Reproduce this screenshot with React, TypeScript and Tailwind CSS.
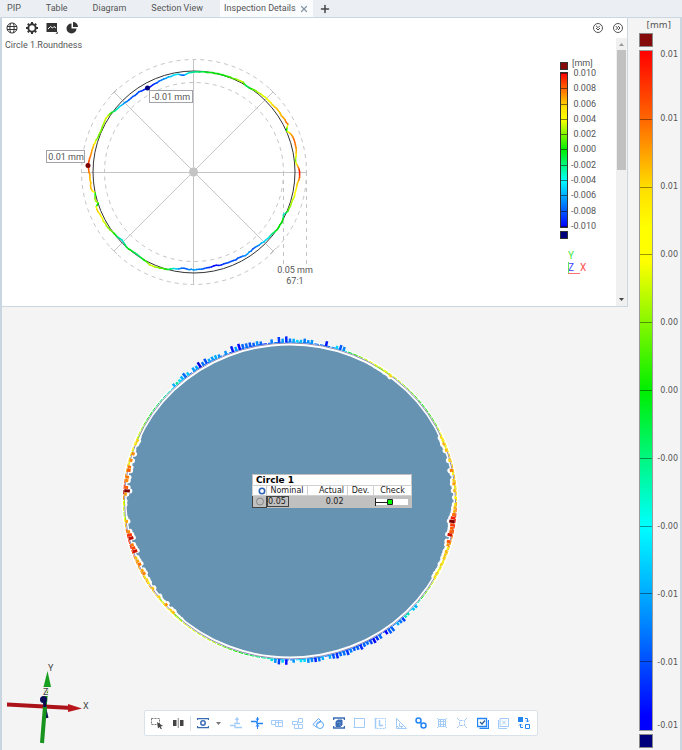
import type { ReactNode } from 'react';
import { ChevronsDown, ChevronsRight, Plus, X } from 'lucide-react';

const LIGHT = '#a3cbf8';
const BLUE = '#2485f5';
const NAVY = '#3a6cb5';

// [angle in degrees, radius] of the measured roundness profile
const profile: [number, number][] = [
  [0, 106], [3, 104], [6, 102], [10, 104], [15, 105], [18, 105], [22, 104], [24, 101], [27, 105], [33, 104],
  [38, 104], [45, 103], [48, 103], [53, 102], [58, 100], [62, 103], [65, 102], [72, 101], [80, 101], [88, 100],
  [94, 99], [96, 97], [99, 99], [106, 98], [112, 97], [118, 96], [124, 97], [130, 97], [136, 98], [142, 100],
  [147, 103], [155, 102], [160, 102], [165, 104], [172, 105], [176, 106], [182, 104], [190, 104], [192, 101],
  [196, 103], [198, 101], [200, 104], [207, 103], [215, 102], [223, 99], [229, 101], [235, 100], [240, 101],
  [245, 103], [254, 101], [258, 99], [263, 97], [270, 98], [276, 97], [282, 96], [290, 97], [297, 97], [303, 98],
  [307, 97], [312, 98], [318, 99], [325, 101], [332, 101], [334, 99], [338, 102], [346, 103], [354, 104],
  [358, 106], [360, 106],
];

// [angle in degrees, deviation from -1 to 1] along the scanned circle
const scan: [number, number][] = [
  [0, 0.5], [6, 0.6], [14, 0.6], [24, 0.45], [28, 0.15], [36, 0], [44, 0.2], [52, 0.4], [60, 0.42], [64, 0.2],
  [68, -0.1], [71, -0.5], [76, -0.75], [86, -0.7], [90, -0.75], [94, -0.7], [98, -0.9], [104, -0.8], [112, -0.75],
  [118, -0.8], [122, -0.85], [128, -0.7], [132, -0.5], [138, -0.25], [147, 0], [152, 0.25], [156, 0.45], [162, 0.5],
  [168, 0.65], [173, 0.9], [176, 1.1], [178, 0.7], [181, 0.4], [184, 0.3], [188, 0.6], [191, 0.95], [196, 1],
  [202, 0.7], [212, 0.65], [218, 0.5], [230, 0.4], [242, 0.3], [252, 0], [262, -0.3], [269, -0.8], [272, -0.5],
  [278, -0.7], [288, -0.8], [295, -0.85], [304, -0.8], [313, -0.6], [319, -0.4], [323, 0.1], [330, 0.45],
  [342, 0.6], [348, 0.9], [353, 1.05], [356, 0.8], [360, 0.5],
];

const stops: [number, number[]][] = [
  [-1.2, [0, 0, 130]],
  [-1, [0, 0, 255]],
  [-0.45, [0, 225, 255]],
  [0, [0, 230, 0]],
  [0.45, [255, 255, 0]],
  [1, [255, 30, 0]],
  [1.2, [128, 0, 0]],
];

function heat(v: number) {
  const value = Math.max(-1.2, Math.min(1.2, v));
  const i = Math.max(1, stops.findIndex(([at]) => at >= value));
  const [a, from] = stops[i - 1];
  const [b, to] = stops[i];
  const t = (value - a) / (b - a);
  return `rgb(${from.map((c, k) => Math.round(c + (to[k] - c) * t)).join(',')})`;
}

function sample(points: [number, number][], angle: number) {
  const i = Math.max(1, points.findIndex(([at]) => at >= angle));
  const [a, from] = points[i - 1];
  const [b, to] = points[i];
  return from + ((to - from) * (angle - a)) / (b - a);
}

function polar(cx: number, cy: number, rx: number, ry: number, angle: number) {
  const rad = (angle * Math.PI) / 180;
  return [cx + rx * Math.cos(rad), cy - ry * Math.sin(rad)];
}

const noise = (n: number) => Math.abs((Math.sin(n * 12.9898) * 43758.5453) % 1);

function RoundnessPlot() {
  const at = (angle: number) => {
    const r = sample(profile, angle) + (noise(angle) - 0.5) * 0.8;
    return polar(194, 172, r, r, angle);
  };
  const steps = Array.from({ length: 240 }, (_, i) => i * 1.5);

  return (
    <svg viewBox="40 54 290 250" className="ml-[38px] h-[250px] w-[290px] shrink-0">
      <g fill="none" stroke="#c4c4c4" strokeWidth="1">
        <circle cx="194" cy="172" r="112.5" strokeDasharray="4 4" />
        <circle cx="194" cy="172" r="89.5" strokeDasharray="4 4" />
        <path d="M283.5 172V266M306.5 172V266" strokeDasharray="4 4" />
        <path d="M81 172.5H307M193.5 60V285M114 92L273 251M114 251L273 92" />
        <path d="M111 95L117 89M270 89L276 95M111 248L117 254M270 254L276 248" />
      </g>
      <circle cx="194" cy="172" r="101" fill="none" stroke="#333" strokeWidth="1" />
      {steps.map((angle) => {
        const [x1, y1] = at(angle);
        const [x2, y2] = at(angle === 358.5 ? 0 : angle + 1.5);
        return (
          <line
            key={angle}
            x1={x1}
            y1={y1}
            x2={x2}
            y2={y2}
            stroke={heat((sample(profile, angle) - 101) / 5)}
            strokeWidth="1.5"
            strokeLinecap="round"
          />
        );
      })}
      <circle cx="193.5" cy="172" r="4.5" fill="#c4c4c4" />
      <circle cx="147.5" cy="88" r="2.5" fill="#00007c" />
      <circle cx="88" cy="165.5" r="2.5" fill="#7c0000" />
      <rect x="149.5" y="90.5" width="43" height="12" fill="#fff" stroke="#a2a2aa" />
      <rect x="46.5" y="150.5" width="38" height="12" fill="#fff" stroke="#a2a2aa" />
      <g fontSize="9" fill="#555" textAnchor="middle">
        <text x="171" y="100">-0.01 mm</text>
        <text x="66" y="160">0.01 mm</text>
        <text x="295" y="273">0.05 mm</text>
        <text x="295" y="284">67:1</text>
      </g>
    </svg>
  );
}

const legend = ['0.010', '0.008', '0.006', '0.004', '0.002', '0.000', '-0.002', '-0.004', '-0.006', '-0.008', '-0.010'];

function Legend() {
  return (
    <div className="mr-5 flex w-9 shrink-0 flex-col pt-[4px] text-[9px] leading-[10px] text-[#555]">
      <div className="flex h-[10px] items-start gap-1">
        <span className="mt-1 h-2 w-2 border border-[#333] bg-[#870a0a]" />
        <span>[mm]</span>
      </div>
      <div className="flex">
        <div className="mt-1 flex h-[156px] w-2 flex-col justify-between border border-[#333] bg-[linear-gradient(to_bottom,#f00_0%,#f60_10%,#fd0_22%,#ff0_30%,#0e0_50%,#0ff_70%,#08f_84%,#00f_100%)]">
          {legend.map((label) => (
            <i key={label} className="h-px bg-black/50" />
          ))}
        </div>
        <div className="flex h-[163px] flex-1 flex-col justify-between text-right">
          {legend.map((label) => (
            <span key={label}>{label}</span>
          ))}
        </div>
      </div>
      <span className="h-2 w-2 border border-[#333] bg-[#00007c]" />
      <svg viewBox="0 0 24 28" className="mt-[10px] ml-[5px] h-7 w-6" fontSize="10">
        <text x="3" y="10" fill="#3fe43f">Y</text>
        <text x="3" y="22" fill="#4040ff">Z</text>
        <text x="15" y="22" fill="#ff5050">X</text>
        <path d="M3.5 13V25" stroke="#5fe85f" />
        <path d="M3 24.5H15" stroke="#ff7070" />
      </svg>
    </div>
  );
}

function PanelTool({ label, children }: { label: string; children: ReactNode }) {
  return (
    <button type="button" aria-label={label} className="flex h-4 w-3 items-center justify-center text-[#333]">
      <svg viewBox="0 0 12 12" className="h-3 w-3 shrink-0" fill="none" stroke="currentColor">
        {children}
      </svg>
    </button>
  );
}

function DetailsPanel() {
  return (
    <section className="flex h-[289px] shrink-0 flex-col border-r border-b border-[#cbd7e0] bg-white">
      <div className="flex h-5 shrink-0 items-center justify-between pr-1 pl-1">
        <div className="flex gap-2">
          <PanelTool label="Globe">
            <circle cx="6" cy="6" r="5" />
            <path d="M1 4.5H11M1 7.5H11M4.5 1.5C3.7 4 3.7 8 4.5 10.5M7.5 1.5C8.3 4 8.3 8 7.5 10.5" />
          </PanelTool>
          <PanelTool label="Settings">
            <circle cx="6" cy="6" r="3.7" strokeWidth="2" />
            <path d="M6 0V2M6 10V12M0 6H2M10 6H12M1.8 1.8L3 3M9 9L10.2 10.2M1.8 10.2L3 9M9 3L10.2 1.8" strokeWidth="2" />
          </PanelTool>
          <PanelTool label="Picture">
            <path d="M0.5 1H11V10H0.5Z" fill="currentColor" stroke="none" />
            <path d="M2 7L4.5 4.5L6.5 6L8 4.5L10 6" stroke="#fff" />
            <path d="M9 12H12V9Z" fill="currentColor" stroke="#fff" strokeWidth="0.5" />
          </PanelTool>
          <PanelTool label="Pie chart">
            <path d="M5.5 1.5V6.5H10.5A5 5 0 1 1 5.5 1.5Z" fill="currentColor" stroke="none" />
            <path d="M7 0A5 5 0 0 1 12 5H7Z" fill="currentColor" stroke="none" />
          </PanelTool>
        </div>
        <div className="flex gap-2.5">
          <button type="button" aria-label="Collapse down" className="flex h-[10px] w-[10px] items-center justify-center rounded-full border border-[#555] text-[#444]">
            <ChevronsDown size={8} strokeWidth={3} className="shrink-0" />
          </button>
          <button type="button" aria-label="Collapse right" className="flex h-[10px] w-[10px] items-center justify-center rounded-full border border-[#555] text-[#444]">
            <ChevronsRight size={8} strokeWidth={3} className="shrink-0" />
          </button>
        </div>
      </div>
      <div className="flex min-h-0 flex-1">
        <div className="flex min-w-0 flex-1 flex-col">
          <h2 className="h-4 pl-[3px] text-[9px] leading-[14px] text-[#555]">Circle 1.Roundness</h2>
          <div className="flex flex-1 items-start justify-between">
            <RoundnessPlot />
            <Legend />
          </div>
        </div>
        <div className="flex w-[11px] flex-col items-center bg-[#f0f0f0]">
          <svg viewBox="0 0 11 12" className="h-3 w-[11px]">
            <path d="M3 8L5.5 5L8 8Z" fill="#999" />
          </svg>
          <div className="h-[120px] w-[9px] bg-[#c1c1c1]" />
          <svg viewBox="0 0 11 12" className="mt-auto h-3 w-[11px]">
            <path d="M3 4L5.5 7L8 4Z" fill="#444" />
          </svg>
        </div>
      </div>
    </section>
  );
}

function ScannedCircle() {
  const segments = Array.from({ length: 180 }, (_, i) => i * 2);
  const ticks = Array.from({ length: 288 }, (_, i) => {
    const angle = i * 1.25;
    const base = sample(scan, angle);
    const value = base + (noise(i + 3) - 0.5) * 0.5;
    const weight = Math.max(0, Math.abs(value) - 0.35);
    const length = base < 0 ? 2.5 + weight * 7 * (0.3 + noise(i + 9) * 0.7) : 1 + weight * 5;
    return { angle, value, length, out: base < 0, strong: Math.abs(base) > 0.38 && noise(i) > 0.2 };
  }).filter((tick) => tick.strong);

  const tickLine = (angle: number, length: number, out: boolean) => {
    const [x1, y1] = polar(289.5, 501, 166, 158.5, angle);
    const reach = out ? length : -length;
    const [x2, y2] = polar(289.5, 501, 166 + reach, 158.5 + reach, angle);
    return { x1, y1, x2, y2 };
  };

  return (
    <svg viewBox="2 307 625 443" className="h-full w-full" fill="none">
      <ellipse cx="289.5" cy="501" rx="166" ry="158" fill="#6793b2" stroke="#fff" strokeWidth="5" />
      {ticks.filter((tick) => !tick.out).map((tick) => (
        <line key={tick.angle} {...tickLine(tick.angle, tick.length, false)} stroke="#fff" strokeWidth="5" strokeLinecap="round" />
      ))}
      <ellipse cx="289.5" cy="501" rx="165.5" ry="158" stroke="#8d8bb5" strokeWidth="1" />
      {segments.map((angle) => {
        const [x1, y1] = polar(289.5, 501, 166.5, 159, angle);
        const [x2, y2] = polar(289.5, 501, 166.5, 159, angle + 1.6);
        return <line key={angle} x1={x1} y1={y1} x2={x2} y2={y2} stroke={heat(sample(scan, angle))} strokeWidth="1" />;
      })}
      {ticks.map((tick) => (
        <line
          key={tick.angle}
          {...tickLine(tick.angle, tick.length, tick.out)}
          stroke={heat(tick.value)}
          strokeWidth={tick.out ? 2.5 : 3}
        />
      ))}
    </svg>
  );
}

function AxisTriad() {
  return (
    <svg viewBox="0 655 110 95" className="absolute bottom-0 -left-0.5 h-[95px] w-[110px]" fontSize="9" fill="#444">
      <path d="M44 705L47 718" stroke="#0b0b55" strokeWidth="3" />
      <path d="M45 706L47 684" stroke="#17931e" strokeWidth="3.5" />
      <path d="M43.5 687L47.5 671L51 687Z" fill="#17a01f" />
      <circle cx="43.5" cy="699.5" r="3.5" fill="#0b0b55" />
      <path d="M7 704.5L72 708" stroke="#ab1219" strokeWidth="4" />
      <path d="M68 704L82 708.5L68 712Z" fill="#b9161b" />
      <path d="M45 706L42 743" stroke="#17931e" strokeWidth="4" />
      <path d="M44 698L45 707" stroke="#0b0b55" strokeWidth="3" />
      <text x="48" y="671">Y</text>
      <text x="83" y="709">X</text>
      <text x="43" y="695" stroke="#f4f4f4" strokeWidth="2" paintOrder="stroke">Z</text>
    </svg>
  );
}

function MeasureLabel() {
  return (
    <table className="absolute top-[167px] left-[250px] w-[160px] table-fixed border-collapse border border-[#c0c0c0] bg-white font-['DejaVu_Sans',sans-serif] text-[8px] leading-[9px] text-[#222]">
      <caption className="border border-b-0 border-[#c0c0c0] bg-white pl-[3px] text-left text-[9px] leading-[10px] font-bold text-black">Circle 1</caption>
      <thead>
        <tr className="h-[10px] [&>th]:border [&>th]:border-[#d0d0d0] [&>th]:p-0 [&>th]:font-normal">
          <th className="w-[14px]" aria-label="Element">
            <svg viewBox="0 0 8 8" className="ml-auto h-2 w-2">
              <circle cx="4" cy="4" r="2.7" fill="none" stroke="#2e62b4" strokeWidth="1.6" />
            </svg>
          </th>
          <th className="w-[41px]">Nominal</th>
          <th className="w-10"><span className="block pr-[3px] text-right">Actual</span></th>
          <th className="w-[26px]">Dev.</th>
          <th>Check</th>
        </tr>
      </thead>
      <tbody>
        <tr className="h-[10px] bg-[#c0c0c0] [&>td]:p-0">
          <td className="border border-[#444]">
            <svg viewBox="0 0 10 9" className="mx-auto h-[9px] w-[10px]">
              <circle cx="5" cy="4.5" r="3.5" fill="none" stroke="#888" />
            </svg>
          </td>
          <td>
            <span className="block w-[22px] border border-[#444] leading-[9px]">0.05</span>
          </td>
          <td><span className="block pr-[4px] text-right">0.02</span></td>
          <td />
          <td>
            <svg viewBox="0 0 38 8" className="h-2 w-[38px]">
              <path d="M1 1H34V7H1Z" fill="#fff" />
              <path d="M1.5 0V8M1 4.5H14" stroke="#222" />
              <path d="M13.5 1.5H18.5V6.5H13.5Z" fill="#0f0" stroke="#222" />
            </svg>
          </td>
        </tr>
      </tbody>
    </table>
  );
}

const tools: { label: string; icon: ReactNode }[] = [
  {
    label: 'Offset up',
    icon: <g stroke={LIGHT} strokeWidth="1.3"><path d="M0 8.5H5V10.5H12M7 1V6M4 6.5H10" /><path d="M5.5 3L7 1L8.5 3" /></g>,
  },
  {
    label: 'Align lines',
    icon: <g stroke={BLUE}><path d="M0 4.5H6V6.5H12" strokeWidth="1.5" /><path d="M6.5 0V4M6.5 7V12" /><path d="M4.5 1.5H8.5L6.5 4ZM4.5 9.5H8.5L6.5 7Z" fill={BLUE} stroke="none" /></g>,
  },
  { label: 'Flatness', icon: <path d="M0.5 3.5H4.5V7.5H0.5ZM4.5 5.5H11.5V9.5H7.5V3.5M4.5 3.5H11.5V5.5M4.5 7.5V9.5H7.5" stroke={LIGHT} /> },
  { label: 'Pattern', icon: <path d="M0.5 4.5H5.5V7.5H0.5ZM6.5 1.5H10.5V5.5H6.5ZM6.5 7.5H10.5V11.5H6.5ZM2.5 7.5V11.5H6.5" stroke={LIGHT} /> },
  {
    label: 'Form',
    icon: <g stroke="#5ca5f6"><circle cx="8" cy="8" r="3.5" /><path d="M5 10.5L1 7.5L6.5 1.5L9.5 4.5M4.5 7.5L9 4.5" /></g>,
  },
  {
    label: 'Solid',
    icon: <g stroke={NAVY}><path d="M0.5 3V1H11.5V3M0.5 9V11H11.5V9" strokeWidth="1.5" /><path d="M3 4.5L5 3H9V8L7.5 9.5H3Z" fill={NAVY} /><path d="M4 5.5H7V9" stroke="#8fb2e4" strokeWidth="0.5" /></g>,
  },
  { label: 'Frame', icon: <path d="M1.5 0.5V11M0.5 10.5H11.5V1.5H1.5" stroke={LIGHT} /> },
  { label: 'Corner', icon: <g stroke={LIGHT}><path d="M1.5 1.5H11.5V11.5H1.5Z" strokeDasharray="2 1" /><path d="M1.5 1V11.5M5.5 3V8.5H9" strokeWidth="1.5" /></g> },
  { label: 'Angle', icon: <path d="M1.5 1V11.5H11.5L1.5 1.5M4.5 6V9.5H8M1 9.5H3M3.5 10V12M6.5 10V12" stroke={LIGHT} /> },
  { label: 'Link', icon: <g stroke={BLUE} strokeWidth="1.5"><circle cx="3.5" cy="3.5" r="2.5" /><circle cx="8.5" cy="8.5" r="2.5" /><path d="M5 5L7 7" /></g> },
  { label: 'Grid', icon: <path d="M2.5 2.5H9.5V9.5H2.5ZM1 1L2.5 2.5M11 1L9.5 2.5M1 11L2.5 9.5M11 11L9.5 9.5M4.5 2V10M7.5 2V10M2 4.5H10M2 7.5H10" stroke={LIGHT} /> },
  { label: 'Fit', icon: <path d="M3.5 3.5H8.5V8.5H3.5ZM1 1L3.5 3.5M11 1L8.5 3.5M1 11L3.5 8.5M11 11L8.5 8.5" stroke={LIGHT} strokeDasharray="3 1" /> },
  { label: 'Accept', icon: <g stroke={BLUE}><path d="M0.5 1.5H9.5V9.5H0.5ZM11.5 3V11.5H2.5" strokeWidth="1.3" /><path d="M3 5L5 7L8 3.5" stroke="#2b5c94" strokeWidth="1.3" /></g> },
  { label: 'Reject', icon: <path d="M3 1.5H11.5V9.5H3ZM1.5 3V11.5H10M5 3.5L9 7.5M9 3.5L5 7.5" stroke={LIGHT} /> },
  {
    label: 'Swap',
    icon: <g stroke={BLUE}><path d="M0 0H5V5H0Z" fill={BLUE} stroke="none" /><path d="M7.5 7.5H11.5V11.5H7.5ZM7 1.5H9.5V5M8 3.5L9.5 5L11 3.5M5 10.5H2.5V7M1 8.5L2.5 7L4 8.5" /></g>,
  },
];

function ToolButton({ label, children }: { label: string; children: ReactNode }) {
  return (
    <button type="button" aria-label={label} className="flex h-4 w-3 items-center justify-center">
      <svg viewBox="0 0 12 12" className="h-3 w-3 shrink-0" fill="none">
        {children}
      </svg>
    </button>
  );
}

function ViewToolbar() {
  return (
    <div className="absolute bottom-[14px] left-[142px] flex h-[26px] w-[394px] items-center rounded-[2px] border border-[#dae2e9] bg-white pr-[7px] pl-[6px]">
      <div className="flex gap-[9px]">
        <ToolButton label="Select">
          <path d="M0.5 1.5H8.5V7M0.5 1.5V7.5H6" stroke="#777" strokeDasharray="2 1" />
          <path d="M6 5L12 9L9.5 9.5L11 12L10 12.5L8.5 10L7 11.5Z" fill="#444" />
        </ToolButton>
        <ToolButton label="Mirror">
          <path d="M1 3H4.5V9H1ZM8 3H11.5V9H8Z" fill="#444" />
          <path d="M6.25 1V11" stroke="#888" />
        </ToolButton>
      </div>
      <span className="mx-[6px] h-[15px] w-px bg-[#dae2e9]" />
      <div className="flex items-center gap-[7px]">
        <ToolButton label="Circle">
          <path d="M0.5 3V1.5H11.5V3M0.5 9V10.5H11.5V9" stroke={NAVY} strokeWidth="1.25" />
          <circle cx="6" cy="6" r="2.2" stroke={NAVY} strokeWidth="1.5" />
        </ToolButton>
        <button type="button" aria-label="More circle options" className="flex h-4 w-[5px] items-center">
          <svg viewBox="0 0 5 3" className="h-[3px] w-[5px]">
            <path d="M0 0H5L2.5 3Z" fill="#777" />
          </svg>
        </button>
      </div>
      <div className="ml-[9px] flex flex-1 justify-between">
        {tools.map((tool) => (
          <ToolButton key={tool.label} label={tool.label}>
            {tool.icon}
          </ToolButton>
        ))}
      </div>
    </div>
  );
}

const scale = ['0.01', '0.01', '0.01', '0.00', '0.00', '0.00', '-0.00', '-0.00', '-0.01', '-0.01', '-0.01'];

function ColorScale() {
  return (
    <aside className="flex w-[54px] shrink-0 flex-col border-r-2 border-[#cbd7e0] bg-[#f4f4f4] pb-0.5 font-['DejaVu_Sans',sans-serif] text-[8px] leading-[10px] text-[#555]">
      <p className="h-[15px] pt-[2px] pr-[9px] text-right text-[9px]">[mm]</p>
      <span className="ml-[11px] h-[14px] w-[14px] border border-[#888] bg-[#870a0a]" />
      <div className="mt-[3px] flex min-h-0 flex-1">
        <div className="ml-[11px] flex w-[14px] flex-col justify-between border border-[#999] bg-[linear-gradient(to_bottom,#f00_0%,#f60_10%,#fd0_20%,#ff0_26%,#ff0_31%,#0e0_50%,#0ff_70%,#08f_84%,#00f_98%)]">
          {scale.map((_, i) => (
            <i key={i} className="h-px bg-black/40 first:opacity-0 last:opacity-0" />
          ))}
        </div>
        <div className="flex flex-1 flex-col justify-between pr-[2px]">
          {scale.map((label, i) => (
            <span key={i} className="flex h-px items-center justify-end first:items-start last:items-end">
              {label}
            </span>
          ))}
        </div>
      </div>
      <span className="mt-[3px] ml-[11px] h-[14px] w-[14px] border border-[#888] bg-[#00007c]" />
    </aside>
  );
}

const tabs = ['PIP', 'Table', 'Diagram', 'Section View'];

export default function App() {
  return (
    <div className="flex h-screen min-h-[560px] flex-col bg-[#f4f4f4] font-[Roboto,sans-serif] text-[#555]">
      <nav className="flex h-[18px] shrink-0 items-stretch border-b border-[#cbd7e0] bg-[#ebeff3] text-[9px]">
        <div className="flex gap-[25px] pr-[17px] pl-[7px]">
          {tabs.map((tab) => (
            <button key={tab} type="button" className="whitespace-nowrap">
              {tab}
            </button>
          ))}
        </div>
        <div className="flex items-center gap-[3px] bg-[#fbfcfd] px-[4px]">
          <button type="button" className="whitespace-nowrap">Inspection Details</button>
          <button type="button" aria-label="Close tab">
            <X size={10} strokeWidth={3} color="#8796a5" />
          </button>
        </div>
        <button type="button" aria-label="Add tab" className="ml-[6px]">
          <Plus size={12} strokeWidth={3} color="#444" />
        </button>
      </nav>
      <div className="flex min-h-0 flex-1">
        <main className="flex min-w-0 flex-1 flex-col border-l-2 border-[#c9d6e2]">
          <DetailsPanel />
          <section className="relative min-h-0 flex-1 overflow-hidden" aria-label="3D view">
            <ScannedCircle />
            <AxisTriad />
            <MeasureLabel />
            <ViewToolbar />
          </section>
        </main>
        <ColorScale />
      </div>
    </div>
  );
}
